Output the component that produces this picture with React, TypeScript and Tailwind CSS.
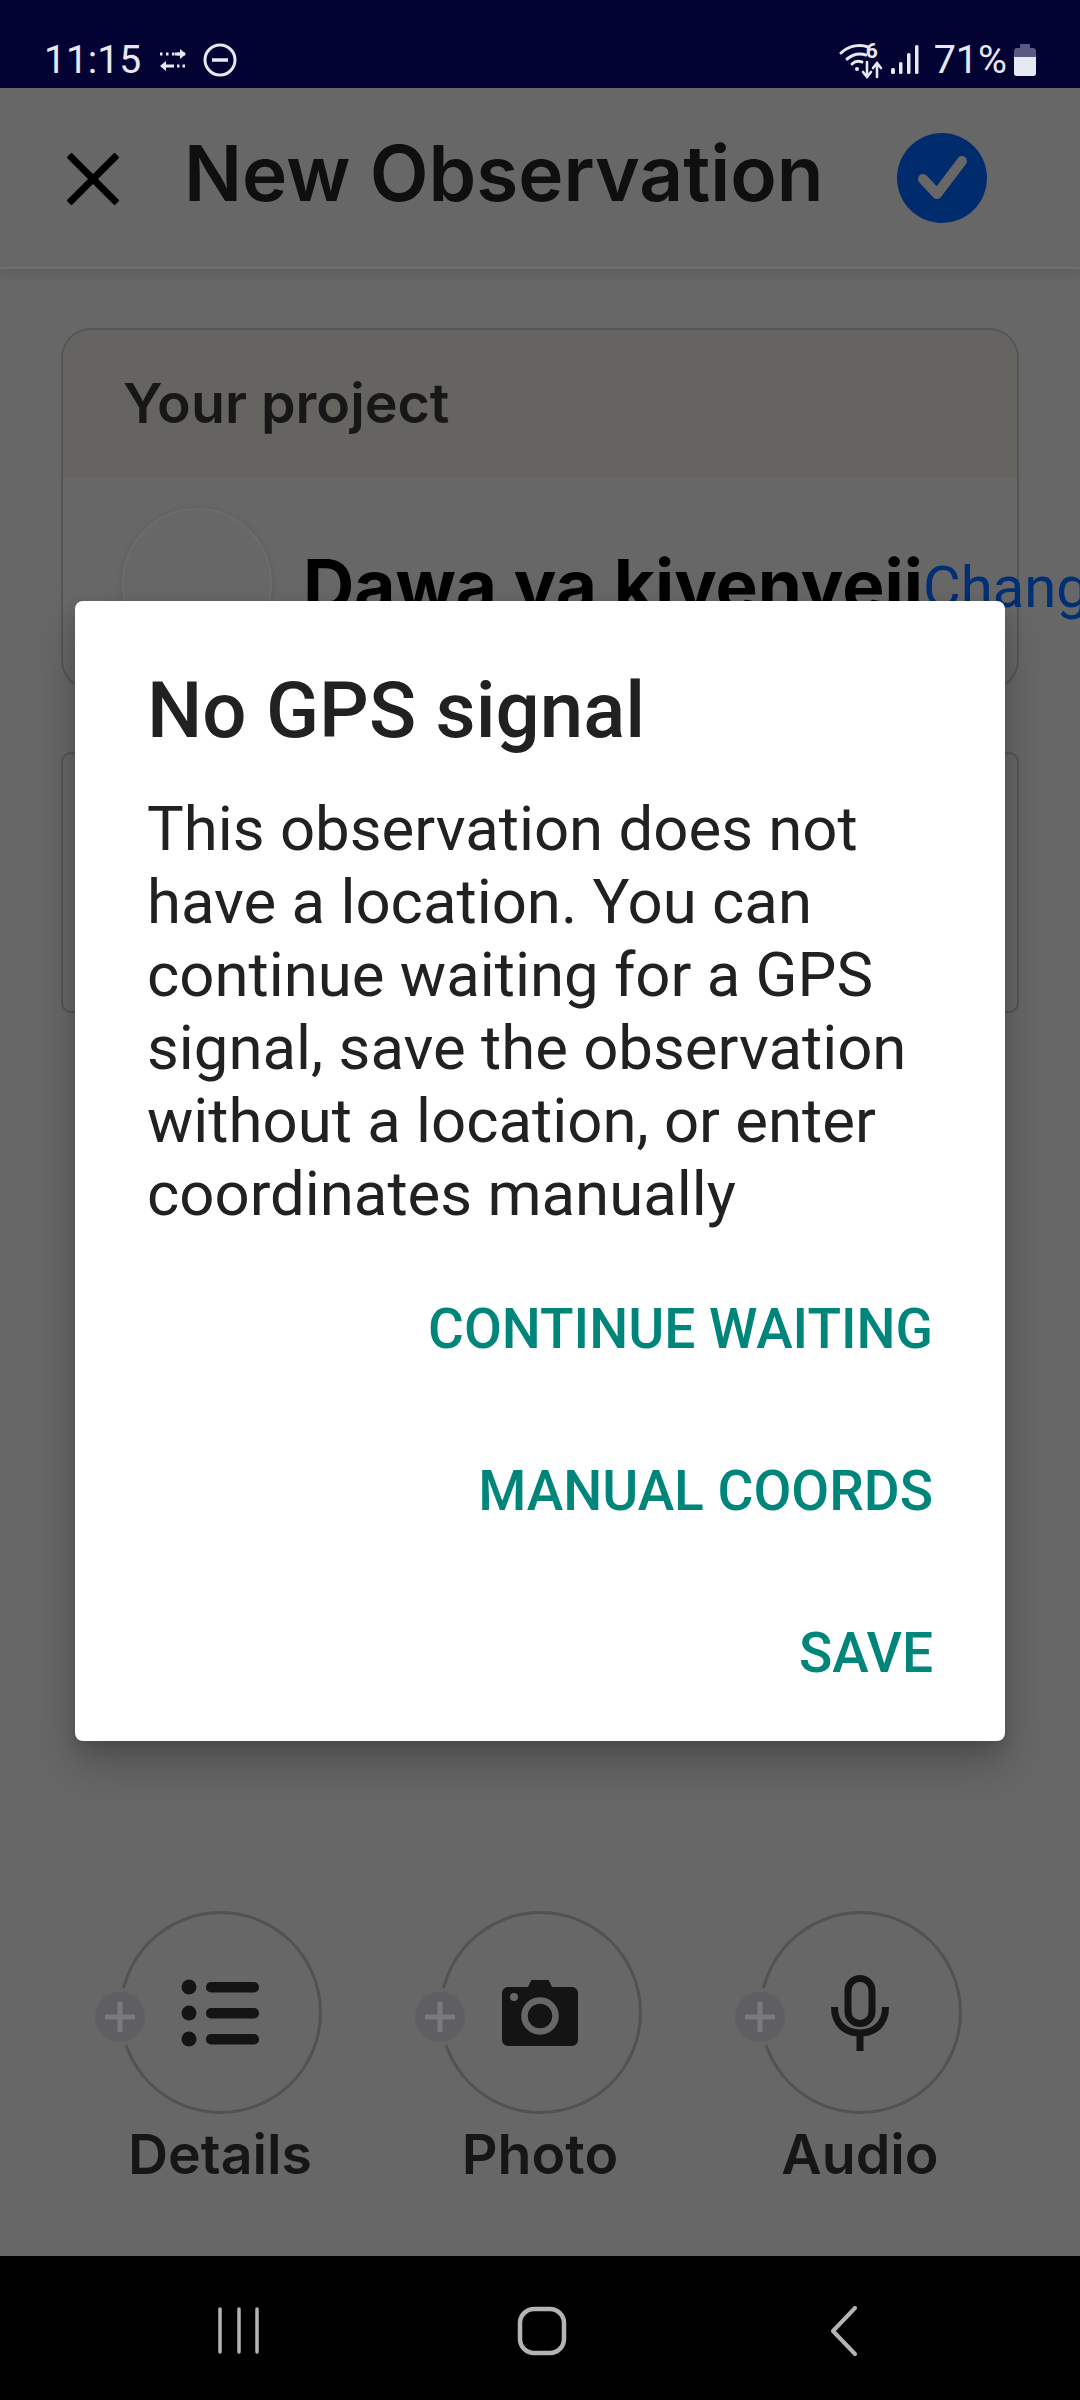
// New Observation screen, dimmed behind the "No GPS signal" dialog.

const ROBOTO = "font-['Roboto',sans-serif]";
const INTER = "font-['Inter',sans-serif]";

function StatusBar() {
  return (
    <div className={`flex h-[88px] shrink-0 items-end justify-between bg-[#020233] pb-[5px] pl-[44px] pr-[44px] text-[#e8e8f4] ${ROBOTO}`}>
      <div className="flex items-center">
        <span className="text-[39px] leading-[46px]">11:15</span>
        <svg width="30" height="26" viewBox="0 0 30 26" className="ml-[17px]" fill="none" stroke="currentColor">
          <path d="M2 7h3M8 7h3M14 7h11" strokeWidth="3" strokeDasharray="2.5 2.5" />
          <path d="M17 7h10" strokeWidth="3" />
          <path d="M22 2l6 5-6 5z" fill="currentColor" stroke="none" />
          <path d="M5 19h11" strokeWidth="3" />
          <path d="M8 14l-6 5 6 5z" fill="currentColor" stroke="none" />
          <path d="M19 19h9" strokeWidth="3" strokeDasharray="2.5 3" />
        </svg>
        <svg width="34" height="34" viewBox="0 0 34 34" className="ml-[15px]" fill="none" stroke="currentColor" strokeWidth="3">
          <circle cx="17" cy="17" r="15" />
          <path d="M9 17h16" strokeWidth="3.5" />
        </svg>
      </div>
      <div className="flex items-center">
        <div className="relative h-[40px] w-[46px]">
          <svg width="46" height="40" viewBox="0 0 46 40" fill="none" stroke="currentColor" strokeWidth="3" strokeLinecap="round">
            <path d="M2 13C10 5 22 4 29 7" />
            <path d="M8 19c6-5 13-6 19-4" />
            <path d="M13 24c3-3 7-3 10-2" />
            <circle cx="18" cy="29" r="2" fill="currentColor" stroke="none" />
            <path d="M28 22v14M24 32l4 5 4-5" strokeWidth="2.6" />
            <path d="M38 37V24M34 28l4-5 4 5" strokeWidth="2.6" />
          </svg>
          <span className="absolute left-[27px] top-[-1px] text-[21px] font-bold leading-[24px]">6</span>
        </div>
        <svg width="28" height="30" viewBox="0 0 28 30" className="ml-[6px]" fill="currentColor">
          <rect x="0" y="23" width="4" height="6" rx="1.5" />
          <rect x="8" y="17" width="3.5" height="12" rx="1.5" />
          <rect x="16" y="8" width="3.5" height="21" rx="1.5" />
          <rect x="24" y="0" width="3.5" height="29" rx="1.5" />
        </svg>
        <span className="ml-[15px] text-[39.5px] leading-[46px]">71%</span>
        <svg width="22" height="32" viewBox="0 0 22 32" className="ml-[7px]">
          <path d="M7 0h8a1 1 0 0 1 1 1v3h3a3 3 0 0 1 3 3v22a3 3 0 0 1-3 3H3a3 3 0 0 1-3-3V7a3 3 0 0 1 3-3h3V1a1 1 0 0 1 1-1z" fill="#5a5a80" />
          <path d="M0 13h22v16a3 3 0 0 1-3 3H3a3 3 0 0 1-3-3z" fill="#e8e8f4" />
        </svg>
      </div>
    </div>
  );
}

function Header() {
  return (
    <div className="relative flex h-[181px] shrink-0 items-center border-b-2 border-[#6e6e6e] pl-[67px] pr-[93px] shadow-[0_5px_10px_rgba(0,0,0,0.1)]">
      <svg width="52" height="52" viewBox="0 0 52 52" fill="none" stroke="#000" strokeWidth="7" className="mt-[3px]">
        <path d="M2 2l48 48M50 2L2 50" />
      </svg>
      <span className={`mb-[10px] ml-[65px] text-[76.500px] font-semibold leading-[90px] text-[#0f0f0f] ${INTER}`}>New Observation</span>
      <svg width="90" height="90" viewBox="0 0 90 90" className="ml-auto">
        <circle cx="45" cy="45" r="45" fill="#002c6e" />
        <path d="M26 46l14 15 25-33" fill="none" stroke="#676767" strokeWidth="10" strokeLinecap="round" strokeLinejoin="round" />
      </svg>
    </div>
  );
}

function ProjectCard() {
  return (
    <div className="mx-[61px] mt-[59px] h-[362px] rounded-[30px] border-2 border-[#555557]">
      <div className="flex h-[148px] items-center rounded-t-[28px] bg-[#666460] pb-[2px] pl-[60px]">
        <span className={`text-[55.500px] font-semibold leading-[66px] text-[#171717] ${INTER}`}>Your project</span>
      </div>
      <div className="flex items-center pl-[59px] pt-[30px]">
        <div className="size-[150px] shrink-0 rounded-full border-2 border-[#6c6c6c] shadow-[0_1px_6px_rgba(0,0,0,0.12)]" />
        <span className={`ml-[31px] mt-[4px] whitespace-nowrap text-[71px] font-bold leading-[84px] text-black ${INTER}`}>Dawa ya kivenyeji</span>
        <span className={`mt-[8px] whitespace-nowrap text-[58px] leading-[68px] text-[#002f74] ${ROBOTO}`}>Change</span>
      </div>
    </div>
  );
}

function AddButton({ label, children }: { label: string; children: React.ReactNode }) {
  return (
    <div className="flex w-[320px] flex-col items-center">
      <div className="relative flex size-[203px] items-center justify-center rounded-full border-[3px] border-[#525252]">
        {children}
        <div className="absolute left-[-31px] top-[74px] flex size-[58px] items-center justify-center rounded-full border-4 border-[#676767] bg-[#5e5e63]">
          <svg width="32" height="32" viewBox="0 0 32 32" stroke="#7a7a7f" strokeWidth="5">
            <path d="M16 1v30M1 16h30" />
          </svg>
        </div>
      </div>
      <span className={`mt-[10px] text-[55.500px] font-semibold leading-[60px] text-[#161616] ${INTER}`}>{label}</span>
    </div>
  );
}

function ListIcon() {
  return (
    <svg width="78" height="68" viewBox="0 0 78 68" fill="#141414">
      <circle cx="8" cy="8" r="7.5" />
      <circle cx="8" cy="34" r="7.5" />
      <circle cx="8" cy="60" r="7.5" />
      <rect x="25" y="3" width="53" height="10.5" rx="5" />
      <rect x="25" y="29" width="53" height="10.5" rx="5" />
      <rect x="25" y="55" width="53" height="10.5" rx="5" />
    </svg>
  );
}

function CameraIcon() {
  return (
    <svg width="76" height="66" viewBox="0 0 76 66" fill="#141414">
      <path d="M26 7l3-6a1 1 0 0 1 1-1h16a1 1 0 0 1 1 1l3 6h20a6 6 0 0 1 6 6v47a6 6 0 0 1-6 6H6a6 6 0 0 1-6-6V13a6 6 0 0 1 6-6z" />
      <circle cx="38" cy="36" r="15.5" fill="none" stroke="#676767" strokeWidth="6.5" />
      <circle cx="12" cy="17" r="4" fill="#676767" />
    </svg>
  );
}

function MicIcon() {
  return (
    <svg width="58" height="76" viewBox="0 0 58 76" fill="none" stroke="#141414" strokeWidth="7">
      <rect x="17" y="3.5" width="24" height="45" rx="12" />
      <path d="M3.5 32c0 17 11 26 25.500 26s25.500-9 25.500-26" />
      <path d="M29 57v19" />
    </svg>
  );
}

function Dialog() {
  return (
    <div className={`absolute left-[75px] top-[601px] h-[1140px] w-[930px] rounded-[8px] bg-white pl-[72px] pr-[72px] pt-[65px] shadow-[0_24px_44px_rgba(0,0,0,0.22),0_8px_16px_rgba(0,0,0,0.12)] ${ROBOTO}`}>
      <div className="text-[78px] font-medium leading-[90px] text-[#212121]">No GPS signal</div>
      <div className="mt-[37px] text-[61.700px] leading-[73px] text-[#212121]">
        This observation does not have a location. You can continue waiting for a GPS signal, save the observation without a location, or enter coordinates manually
      </div>
      <div className="mt-[68px] flex flex-col items-end gap-[102px] text-[55px] font-medium leading-[60px] text-[#00857a]">
        <span>CONTINUE WAITING</span>
        <span>MANUAL COORDS</span>
        <span>SAVE</span>
      </div>
    </div>
  );
}

function NavBar() {
  return (
    <div className="flex h-[144px] shrink-0 items-start bg-black pl-[218px] pt-[50px]">
      <svg width="42" height="48" viewBox="0 0 42 48" stroke="#b4b4b4" strokeWidth="3.500" strokeLinecap="round">
        <path d="M2 3v43M21 3v43M39 3v43" />
      </svg>
      <svg width="50" height="50" viewBox="0 0 50 50" fill="none" stroke="#b4b4b4" strokeWidth="4.500" className="ml-[257px]">
        <rect x="3" y="3" width="44" height="44" rx="14" />
      </svg>
      <svg width="28" height="50" viewBox="0 0 28 50" fill="none" stroke="#b4b4b4" strokeWidth="4" strokeLinecap="round" strokeLinejoin="round" className="ml-[263px]">
        <path d="M25 2L3 25l22 23" />
      </svg>
    </div>
  );
}

export default function App() {
  return (
    <div className="relative flex h-[2400px] w-[1080px] flex-col overflow-hidden bg-[#676767]">
      <StatusBar />
      <Header />
      <ProjectCard />
      <div className="mx-[61px] mt-[62px] h-[261px] rounded-[10px] border-2 border-[#555557]" />
      <div className="mt-auto flex justify-center pb-[72px]">
        <AddButton label="Details"><ListIcon /></AddButton>
        <AddButton label="Photo"><CameraIcon /></AddButton>
        <AddButton label="Audio"><MicIcon /></AddButton>
      </div>
      <NavBar />
      <Dialog />
    </div>
  );
}
